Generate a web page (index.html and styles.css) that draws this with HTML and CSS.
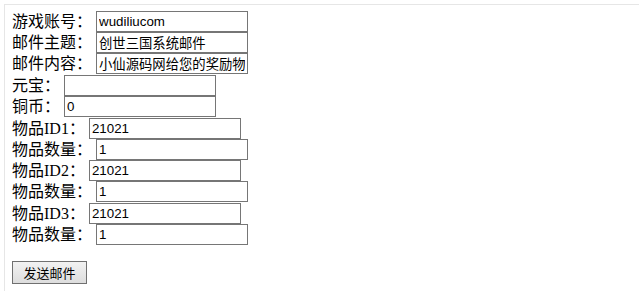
FILE: index.html
```html
<!DOCTYPE html>
<html>
<head>
<meta charset="utf-8">
<link rel="stylesheet" href="styles.css">
</head>
<body>
<div class="frame">
  <form class="mail-form">
    <div class="row"><span class="label">游戏账号：</span><input class="field" type="text" value="wudiliucom"></div>
    <div class="row"><span class="label">邮件主题：</span><input class="field" type="text" value="创世三国系统邮件"></div>
    <div class="row"><span class="label">邮件内容：</span><input class="field" type="text" value="小仙源码网给您的奖励物品"></div>
    <div class="row row-shift"><span class="label">元宝：</span><input class="field" type="text" value=""></div>
    <div class="row"><span class="label">铜币：</span><input class="field" type="text" value="0"></div>
    <div class="row row-shift"><span class="label">物品ID1：</span><input class="field" type="text" value="21021"></div>
    <div class="row"><span class="label">物品数量：</span><input class="field" type="text" value="1"></div>
    <div class="row"><span class="label">物品ID2：</span><input class="field" type="text" value="21021"></div>
    <div class="row"><span class="label">物品数量：</span><input class="field" type="text" value="1"></div>
    <div class="row row-shift"><span class="label">物品ID3：</span><input class="field" type="text" value="21021"></div>
    <div class="row"><span class="label">物品数量：</span><input class="field" type="text" value="1"></div>
    <div class="actions"><button class="send" type="button">发送邮件</button></div>
  </form>
</div>
</body>
</html>
```
FILE: styles.css
```css
html, body {
  margin: 0;
  padding: 0;
  background: #ffffff;
}
body {
  font-family: "Liberation Serif", "Noto Sans CJK SC", serif;
  font-size: 16px;
  color: #000;
}
.frame {
  margin: 4px 0 0 4px;
  height: 287px;
  box-sizing: border-box;
  border-top: 1px solid #e6e6e6;
  border-left: 1px solid #e6e6e6;
  padding: 6px 0 0 7px;
}
.mail-form {
  display: flex;
  flex-direction: column;
}
.row {
  display: flex;
  align-items: center;
  gap: 4px;
  height: 21px;
}
.row-shift {
  margin-top: 1px;
}
.label {
  white-space: nowrap;
  line-height: 21px;
}
.field {
  box-sizing: border-box;
  width: 152px;
  height: 21px;
  margin: 0;
  padding: 0 2px;
  border: 1px solid #767676;
  border-radius: 0;
  font-family: "Liberation Sans", "Noto Sans CJK SC", sans-serif;
  font-size: 13.33px;
  color: #000;
  background: #fff;
  outline: none;
}
.actions {
  margin-top: 16px;
}
.send {
  box-sizing: border-box;
  width: 75px;
  height: 23px;
  margin: 0;
  padding: 0;
  border: 1px solid #707070;
  border-radius: 0;
  background: linear-gradient(#f2f2f2, #dddddd);
  font-family: "Noto Sans CJK SC", "Liberation Sans", sans-serif;
  font-size: 13px;
  color: #000;
}
```
